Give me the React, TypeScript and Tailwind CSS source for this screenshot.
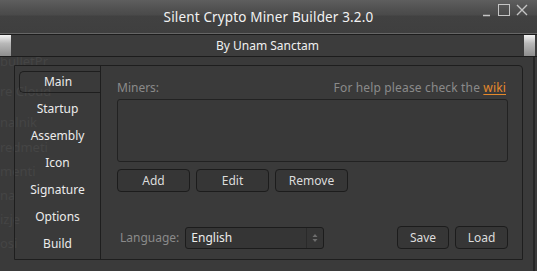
import React from "react";

const tabs = ["Main", "Startup", "Assembly", "Icon", "Signature", "Options", "Build"];
const ghosts: [string, number][] = [
  ["bulletPr", -5],
  ["re Cloud", 25],
  ["nalnik", 56],
  ["redmeti", 81],
  ["menti", 105],
  ["na", 129],
  ["izje", 153],
  ["osi", 177],
];

function Btn({ label, w }: { label: string; w: string }) {
  return (
    <div
      className={`${w} h-[23px] flex items-center justify-center rounded-[4px] border border-[#1c1c1c] bg-[#363636] text-[12px] text-[#dcdcdc]`}
    >
      {label}
    </div>
  );
}

export default function App() {
  return (
    <div
      className="relative w-[537px] h-[271px] overflow-hidden bg-[#3a3a3a] flex flex-col"
      style={{ fontFamily: '"Noto Sans", "DejaVu Sans", sans-serif' }}
    >
      {/* title bar */}
      <div className="relative h-[33px] shrink-0 grid grid-cols-[1fr_auto_1fr] items-center bg-[linear-gradient(to_bottom,#5e5e5e_0px,#525252_8px,#4a4a4a_15px,#414141_16px,#3f3f3f_33px)]">
        <div />
        <div className="text-[13.5px] text-[#f2f2f2] tracking-[0.15px] pt-[1px]">
          Silent Crypto Miner Builder 3.2.0
        </div>
        <div className="justify-self-end self-start flex items-start gap-[6px] pt-[4px] pr-[9px]">
          <svg width="12" height="12" viewBox="0 0 12 12" className="mt-[1px]">
            <line x1="3" y1="10.5" x2="10" y2="10.5" stroke="#c4c4c4" strokeWidth="1.5" />
          </svg>
          <svg width="12" height="12" viewBox="0 0 12 12">
            <rect x="0.5" y="0.5" width="11" height="11" fill="none" stroke="#c4c4c4" strokeWidth="1" />
          </svg>
          <svg width="12" height="12" viewBox="0 0 12 12">
            <path d="M1 1 L11 11 M11 1 L1 11" stroke="#c4c4c4" strokeWidth="1.4" />
          </svg>
        </div>
      </div>
      <div className="h-px shrink-0 bg-[#666666]" />
      <div className="h-px shrink-0 bg-[#1c1c1c]" />

      {/* subtitle bar */}
      <div className="h-[21px] shrink-0 flex items-stretch bg-[#3c3c3c]">
        <div className="w-[11px] bg-[linear-gradient(to_bottom,#f4f4f4,#b8b8b8_40%,#8e8e8e)]" />
        <div className="flex-1 flex items-center justify-center text-[12px] text-[#f0f0f0]">
          By Unam Sanctam
        </div>
        <div className="w-[11px] mr-[2px] bg-[linear-gradient(to_bottom,#f4f4f4,#b8b8b8_40%,#8e8e8e)]" />
      </div>
      <div className="h-px shrink-0 bg-[#1c1c1c]" />

      {/* body */}
      <div className="relative flex-1 overflow-hidden pl-[14px] pt-[8px]">
        {/* faint text of the window behind */}
        <div className="pointer-events-none absolute inset-0 z-0 text-[13px] text-[#454545]">
          {ghosts.map(([t, y]) => (
            <div key={t} className="absolute left-0" style={{ top: y }}>
              {t}
            </div>
          ))}
        </div>

        <div className="relative z-10 w-[509px] h-[195px] flex border border-[#1e1e1e] rounded-tr-[4px]">
          {/* tab list */}
          <div className="w-[85px] flex flex-col pt-[2px]">
            {tabs.map((t, i) =>
              i === 0 ? (
                <div key={t} className="h-[27px] flex items-center">
                  <div className="ml-[4px] flex-1 h-[22px] pr-[4px] flex items-center justify-center border-y border-l border-[#1e1e1e] rounded-l-[5px] text-[12px] text-[#ececec]">
                    {t}
                  </div>
                </div>
              ) : (
                <div key={t} className="h-[27px] flex items-center justify-center text-[12px] text-[#ececec]">
                  {t}
                </div>
              )
            )}
          </div>

          {/* content */}
          <div className="flex-1 flex flex-col border-l border-[#1e1e1e] pl-[16px] pr-[14px] pt-[14px] pb-[10px]">
            <div className="h-[16px] flex items-center justify-between text-[12px] text-[#8a8a8a]">
              <span>Miners:</span>
              <span className="pr-[2px] tracking-[0.15px]">
                For help please check the{" "}
                <span className="text-[#e5892c] underline underline-offset-2">wiki</span>
              </span>
            </div>
            <div className="mt-[3px] h-[63px] rounded-[3px] border border-[#222222] bg-[#393939]" />
            <div className="mt-[7px] flex gap-[6px]">
              <Btn label="Add" w="w-[73px]" />
              <Btn label="Edit" w="w-[73px]" />
              <Btn label="Remove" w="w-[73px]" />
            </div>
            <div className="mt-auto flex items-center">
              <span className="ml-[3px] text-[12px] text-[#8a8a8a]">Language:</span>
              <div className="ml-[6px] w-[139px] h-[22px] flex rounded-[3px] border border-[#1c1c1c] bg-[#353535]">
                <div className="flex-1 flex items-center pl-[5px] text-[12px] text-[#ececec]">English</div>
                <div className="w-[17px] flex items-center justify-center border-l border-[#2a2a2a]">
                  <svg width="6" height="10" viewBox="0 0 6 10">
                    <path d="M0.5 4 L3 1 L5.5 4 Z M0.5 6 L3 9 L5.5 6 Z" fill="#6e6e6e" />
                  </svg>
                </div>
              </div>
              <div className="ml-auto flex gap-[6px]">
                <Btn label="Save" w="w-[52px]" />
                <Btn label="Load" w="w-[53px]" />
              </div>
            </div>
          </div>
        </div>
        <div className="absolute right-[2px] top-0 bottom-0 w-[2px] bg-[#262626]" />
      </div>
    </div>
  );
}
